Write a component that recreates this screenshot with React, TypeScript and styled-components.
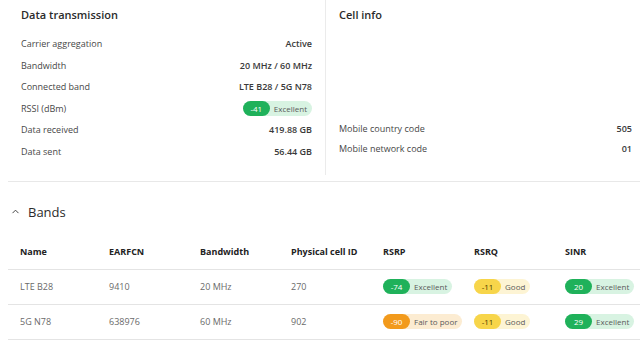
import React from 'react';
import styled, { createGlobalStyle } from 'styled-components';

const GlobalStyle = createGlobalStyle`
  body {
    margin: 0;
    background: #ffffff;
    font-family: 'Open Sans', 'Noto Sans', sans-serif;
    color: #333333;
  }
`;

const Page = styled.div`
  width: 640px;
  height: 340px;
  overflow: hidden;
  padding-left: 8px;
  box-sizing: border-box;
`;

const TopGrid = styled.div`
  display: grid;
  grid-template-columns: 318px 1fr;
  height: 181px;
  border-bottom: 1px solid #e8e8e8;
  margin-right: -20px;
`;

const Panel = styled.section<{ $divider?: boolean }>`
  display: flex;
  flex-direction: column;
  padding: 0 ${(p) => (p.$divider ? '13px' : '28px')} 0 13px;
  height: 175px;
  box-sizing: border-box;
  border-right: ${(p) => (p.$divider ? '1px solid #ebebeb' : 'none')};
`;

const PanelTitle = styled.h2`
  margin: 0;
  padding-top: 6px;
  height: 27px;
  font-size: 11px;
  font-weight: 600;
  color: #2b2b2b;
  line-height: 18px;
`;

const Rows = styled.div<{ $bottom?: boolean }>`
  display: flex;
  flex-direction: column;
  margin-top: ${(p) => (p.$bottom ? 'auto' : '0')};
  padding-bottom: ${(p) => (p.$bottom ? '17px' : '0')};
`;

const Row = styled.div<{ $h: number }>`
  display: flex;
  align-items: center;
  justify-content: space-between;
  height: ${(p) => p.$h}px;
  font-size: 9px;
`;

const Label = styled.span`
  color: #474747;
`;

const Value = styled.span`
  color: #3a3a3a;
  font-weight: 600;
`;

const SectionHeader = styled.div`
  display: flex;
  align-items: center;
  gap: 8px;
  height: 52px;
  padding-left: 3px;
  padding-top: 7px;
  box-sizing: border-box;
  font-size: 13px;
  color: #2b2b2b;
`;

const Table = styled.table`
  border-collapse: collapse;
  table-layout: fixed;
  width: 635px;
  font-size: 9px;
`;

const Th = styled.th<{ $w: number }>`
  width: ${(p) => p.$w}px;
  height: 35px;
  padding: 0 0 0 12px;
  text-align: left;
  font-weight: 700;
  color: #222222;
  border-bottom: 1px solid #e4e4e4;
  box-sizing: border-box;
`;

const Td = styled.td`
  height: 35px;
  padding: 0 0 0 12px;
  color: #6a6a6a;
  border-bottom: 1px solid #e4e4e4;
  box-sizing: border-box;
  white-space: nowrap;
`;

type Level = 'good' | 'fair' | 'poor';

const tones: Record<Level, { solid: string; soft: string }> = {
  good: { solid: '#1fb15a', soft: '#d8f3e2' },
  fair: { solid: '#f7d54a', soft: '#fdf4d4' },
  poor: { solid: '#f29a1c', soft: '#fcecd2' },
};

const Badge = styled.span<{ $level: Level }>`
  display: inline-flex;
  align-items: center;
  height: 15px;
  border-radius: 8px;
  background: ${(p) => tones[p.$level].soft};
  font-size: 8px;
  line-height: 15px;
  white-space: nowrap;
  vertical-align: middle;
`;

const BadgeNum = styled.span<{ $level: Level }>`
  display: inline-block;
  min-width: 27px;
  height: 15px;
  border-radius: 8px;
  text-align: center;
  background: ${(p) => tones[p.$level].solid};
  color: ${(p) => (p.$level === 'fair' ? '#4a3b00' : '#ffffff')};
`;

const BadgeText = styled.span`
  padding: 0 5px 0 4px;
  color: #5a5a5a;
`;

const Signal = ({ value, text, level }: { value: string; text: string; level: Level }) => (
  <Badge $level={level}>
    <BadgeNum $level={level}>{value}</BadgeNum>
    <BadgeText>{text}</BadgeText>
  </Badge>
);

const Chevron = () => (
  <svg width="9" height="9" viewBox="0 0 10 10" fill="none" stroke="#444" strokeWidth="1.1">
    <path d="M2 6.5 L5 3.5 L8 6.5" strokeLinecap="round" strokeLinejoin="round" />
  </svg>
);

const transmission: [string, React.ReactNode][] = [
  ['Carrier aggregation', 'Active'],
  ['Bandwidth', '20 MHz / 60 MHz'],
  ['Connected band', 'LTE B28 / 5G N78'],
  ['RSSI (dBm)', <Signal value="-41" text="Excellent" level="good" />],
  ['Data received', '419.88 GB'],
  ['Data sent', '56.44 GB'],
];

const columns: [string, number][] = [
  ['Name', 89],
  ['EARFCN', 91],
  ['Bandwidth', 91],
  ['Physical cell ID', 92],
  ['RSRP', 91],
  ['RSRQ', 91],
  ['SINR', 90],
];

const bands = [
  {
    name: 'LTE B28', earfcn: '9410', bw: '20 MHz', pci: '270',
    rsrp: ['-74', 'Excellent', 'good'], rsrq: ['-11', 'Good', 'fair'], sinr: ['20', 'Excellent', 'good'],
  },
  {
    name: '5G N78', earfcn: '638976', bw: '60 MHz', pci: '902',
    rsrp: ['-90', 'Fair to poor', 'poor'], rsrq: ['-11', 'Good', 'fair'], sinr: ['29', 'Excellent', 'good'],
  },
];

const App = () => {
  return (
    <Page>
      <GlobalStyle />
      <TopGrid>
        <Panel $divider>
          <PanelTitle>Data transmission</PanelTitle>
          <Rows>
            {transmission.map(([label, value]) => (
              <Row key={label} $h={21.5}>
                <Label>{label}</Label>
                {typeof value === 'string' ? <Value>{value}</Value> : value}
              </Row>
            ))}
          </Rows>
        </Panel>
        <Panel>
          <PanelTitle>Cell info</PanelTitle>
          <Rows $bottom>
            <Row $h={20}>
              <Label>Mobile country code</Label>
              <Value>505</Value>
            </Row>
            <Row $h={20}>
              <Label>Mobile network code</Label>
              <Value>01</Value>
            </Row>
          </Rows>
        </Panel>
      </TopGrid>
      <SectionHeader>
        <Chevron />
        <span>Bands</span>
      </SectionHeader>
      <Table>
        <thead>
          <tr>
            {columns.map(([h, w]) => (
              <Th key={h} $w={w}>{h}</Th>
            ))}
          </tr>
        </thead>
        <tbody>
          {bands.map((b) => (
            <tr key={b.name}>
              <Td>{b.name}</Td>
              <Td>{b.earfcn}</Td>
              <Td>{b.bw}</Td>
              <Td>{b.pci}</Td>
              {[b.rsrp, b.rsrq, b.sinr].map((s, i) => (
                <Td key={i}>
                  <Signal value={s[0]} text={s[1]} level={s[2] as Level} />
                </Td>
              ))}
            </tr>
          ))}
        </tbody>
      </Table>
    </Page>
  );
};

export default App;
